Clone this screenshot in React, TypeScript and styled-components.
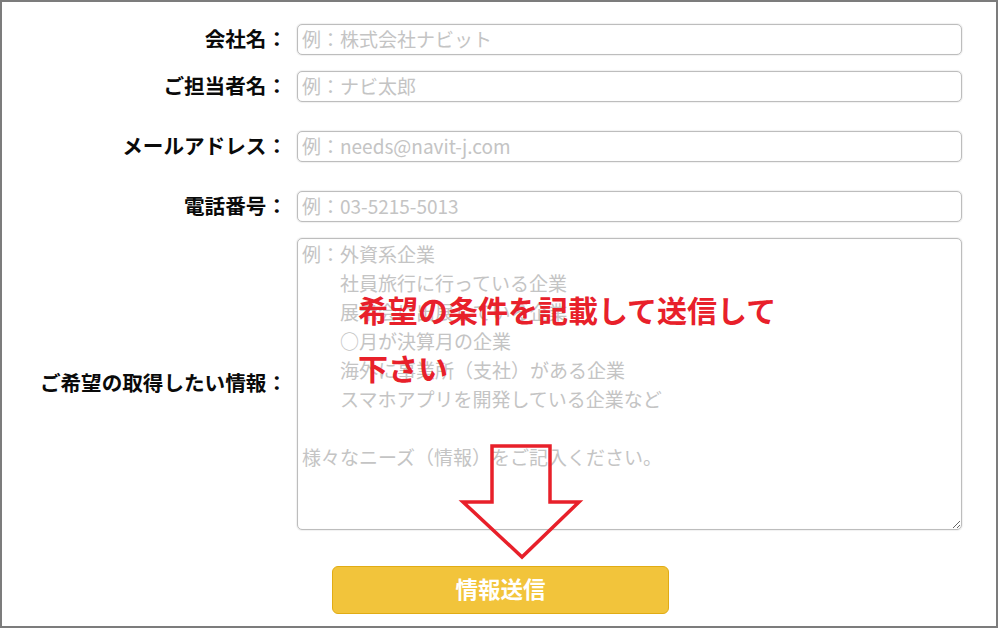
import React from 'react'
import styled, { createGlobalStyle } from 'styled-components'

const GlobalStyle = createGlobalStyle`
    body{
        margin: 0;
        background: #ffffff;
    }
`

const fieldFont = `"Noto Sans CJK JP", "Noto Sans", sans-serif`

const needsPlaceholder = [
    '例：外資系企業',
    '　　社員旅行に行っている企業',
    '　　展示会に出展している企業',
    '　　○月が決算月の企業',
    '　　海外に事業所（支社）がある企業',
    '　　スマホアプリを開発している企業など',
    '',
    '様々なニーズ（情報）をご記入ください。',
].join('\n')

export default function App() {
    return (
        <>
            <GlobalStyle />
            <Frame className='frame'>
                <Form className='form' onSubmit={(e) => e.preventDefault()}>
                    <Row $top={22}>
                        <Label>会社名：</Label>
                        <Input placeholder='例：株式会社ナビット' />
                    </Row>
                    <Row $top={16}>
                        <Label>ご担当者名：</Label>
                        <Input placeholder='例：ナビ太郎' />
                    </Row>
                    <Row $top={29}>
                        <Label>メールアドレス：</Label>
                        <Input placeholder='例：needs@navit-j.com' />
                    </Row>
                    <Row $top={29}>
                        <Label>電話番号：</Label>
                        <Input placeholder='例：03-5215-5013' />
                    </Row>
                    <Row $top={16}>
                        <Label>ご希望の取得したい情報：</Label>
                        <AreaWrap>
                            <TextArea placeholder={needsPlaceholder} />
                            <Note>希望の条件を記載して送信して<br />下さい</Note>
                            <Arrow width='122' height='118' viewBox='0 0 122 118'>
                                <polygon
                                    points='32,3 90,3 90,59 119,59 62,114 3,59 32,59'
                                    fill='none'
                                    stroke='#e8202a'
                                    strokeWidth='3.5'
                                    strokeLinejoin='miter'
                                />
                            </Arrow>
                        </AreaWrap>
                    </Row>
                    <Actions>
                        <Submit type='submit'>情報送信</Submit>
                    </Actions>
                </Form>
            </Frame>
        </>
    )
}

const Frame = styled.div`
    width: 998px;
    height: 628px;
    border: 2px solid #7c7c7c;
    box-sizing: border-box;
    background: #ffffff;
    overflow: hidden;
`

const Form = styled.form`
    display: flex;
    flex-direction: column;
    margin: 0;
`

const Row = styled.div<{ $top: number }>`
    display: grid;
    grid-template-columns: 285px 665px;
    column-gap: 10px;
    align-items: center;
    margin-top: ${({ $top }) => $top}px;
`

const Label = styled.label`
    padding-bottom: 4px;
    line-height: 24px;
    text-align: right;
    white-space: nowrap;
    font-family: ${fieldFont};
    font-size: 20.6px;
    font-weight: 700;
    color: #0a0a0a;
    letter-spacing: 0;
`

const Input = styled.input`
    display: block;
    width: 100%;
    height: 31px;
    box-sizing: border-box;
    padding: 0 4px 3px;
    border: 1px solid #bdbdbd;
    border-radius: 5px;
    box-shadow: 0 0 1px 1px rgba(0, 0, 0, 0.06), inset 0 0 1px rgba(0, 0, 0, 0.1);
    font-family: ${fieldFont};
    font-size: 19px;
    color: #333333;
    outline: none;

    &::placeholder{
        color: #c4c4c4;
        opacity: 1;
    }
`

const AreaWrap = styled.div`
    position: relative;
    height: 292px;
`

const TextArea = styled.textarea`
    display: block;
    width: 100%;
    height: 100%;
    box-sizing: border-box;
    padding: 0 4px;
    border: 1px solid #bdbdbd;
    border-radius: 5px;
    box-shadow: 0 0 1px 1px rgba(0, 0, 0, 0.06), inset 0 0 1px rgba(0, 0, 0, 0.1);
    font-family: ${fieldFont};
    font-size: 19px;
    line-height: 29px;
    color: #333333;
    outline: none;

    &::placeholder{
        color: #c4c4c4;
        opacity: 1;
    }
`

const Note = styled.div`
    position: absolute;
    left: 61px;
    top: 42px;
    font-family: ${fieldFont};
    font-size: 30px;
    font-weight: 700;
    line-height: 58px;
    color: #e8202a;
    white-space: nowrap;
    pointer-events: none;
`

const Arrow = styled.svg`
    position: absolute;
    left: 163px;
    top: 205px;
    overflow: visible;
    pointer-events: none;
`

const Actions = styled.div`
    display: flex;
    margin-top: 36px;
    padding-left: 330px;
`

const Submit = styled.button`
    display: flex;
    justify-content: center;
    align-items: center;
    width: 337px;
    height: 48px;
    padding: 0 0 4px;
    border: 1px solid #e1ac14;
    border-radius: 6px;
    background: #f2c43b;
    color: #ffffff;
    font-family: ${fieldFont};
    font-size: 22.5px;
    font-weight: 700;
    cursor: pointer;
`
